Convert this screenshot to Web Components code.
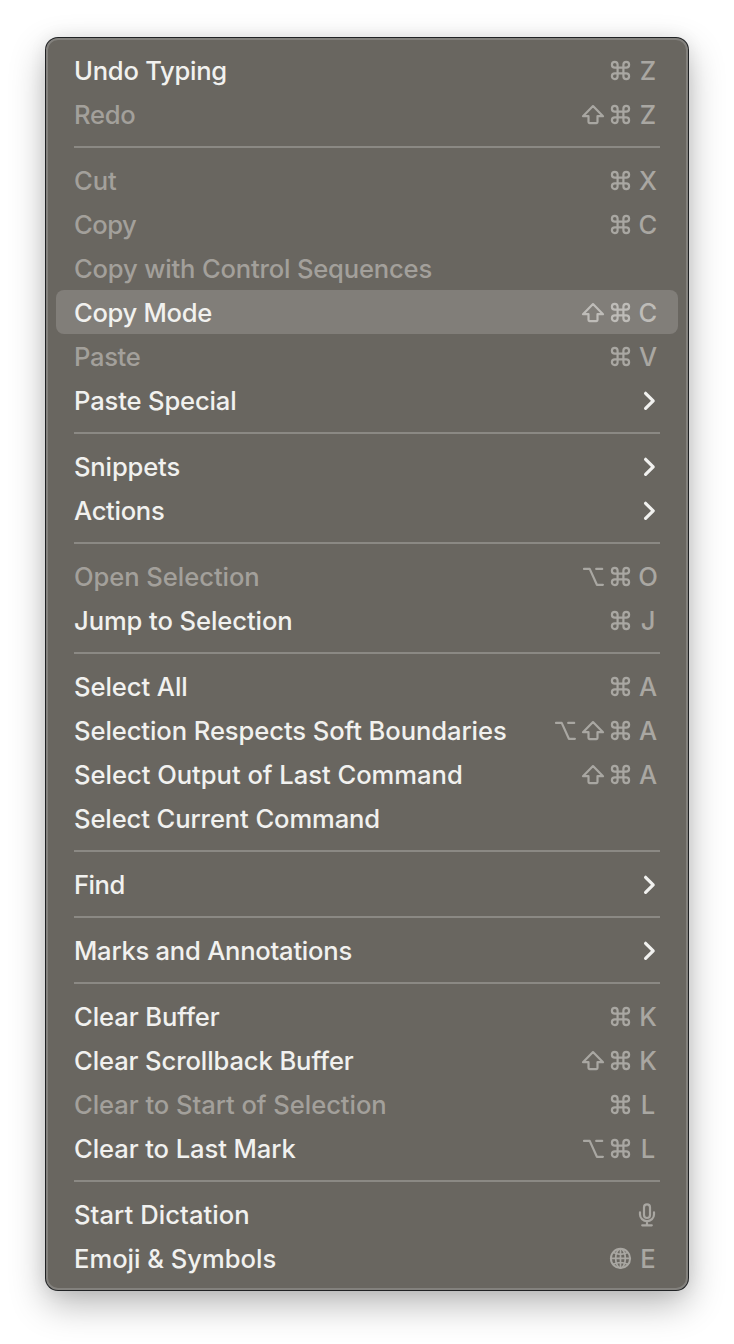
<!DOCTYPE html>
<html lang="en">
<head>
<meta charset="utf-8">
<title>Edit menu</title>
<style>
html,body{margin:0;background:#fff}
body{width:734px;height:1344px;overflow:hidden;font-family:Inter,"Liberation Sans",sans-serif}
</style>
</head>
<body>
<edit-menu></edit-menu>
<script>
const ICONS = {
  cmd: '<path d="M11.6 16.75v11.5a2.85 2.85 0 1 1-2.85-2.85h11.5a2.85 2.85 0 1 1-2.85 2.85v-11.5a2.85 2.85 0 1 1 2.85 2.85h-11.5a2.85 2.85 0 1 1 2.85-2.85z"/>',
  shift: '<path d="M15 14.1 25 24.2h-5.5v5.9a1 1 0 0 1-1 1h-7a1 1 0 0 1-1-1v-5.9H5z"/>',
  opt: '<path d="M6 14.9h5.7l7.2 15.9h6M18.2 14.9h6"/>',
  chevron: '<path stroke-width="3.2" d="m11.6 15.3 7.6 7.5-7.6 7.5"/>',
  mic: '<rect x="10" y="12.4" width="6" height="13.6" rx="3"/><path d="M6 20.3v2.2a7 6.6 0 0 0 14 0v-2.2M13 29.1v4.1M8.2 33.3h9.6"/>',
  globe: '<g stroke-width="1.7"><circle cx="14.5" cy="22.4" r="9.6" stroke-width="2"/><ellipse cx="14.5" cy="22.4" rx="4.8" ry="9.6"/><path d="M14.5 12.8v19.2M4.9 22.4h19.2M7.2 16.6q7.3 3.4 14.6 0M7.2 28.2q7.3-3.4 14.6 0"/></g>'
};

class MenuKey extends HTMLElement {
  connectedCallback() {
    const root = this.attachShadow({mode: 'open'});
    const icon = ICONS[this.getAttribute('icon')];
    root.innerHTML = `<style>
      :host{display:block;width:28px;height:44px;text-align:center;line-height:46px}
      svg{display:block;fill:none;stroke:currentColor;stroke-width:2.2;stroke-linecap:round;stroke-linejoin:round}
    </style>` + (icon ? `<svg width="28" height="44" viewBox="0 0 28 44">${icon}</svg>` : '<slot></slot>');
  }
}
customElements.define('menu-key', MenuKey);

class MenuItem extends HTMLElement {
  connectedCallback() {
    const root = this.attachShadow({mode: 'open'});
    root.innerHTML = `<style>
      :host{display:flex;justify-content:space-between;height:44px;margin:0 8px;padding:0 16px 0 18px;border-radius:8px;
        font-size:25.6px;font-weight:450;line-height:45px;color:#f1f1ef;white-space:nowrap}
      :host([disabled]){color:#a3a09b}
      :host([selected]){background:#817e79}
      .keys{display:flex;color:#a9a7a2}
      :host([selected]) .keys{color:#bebcb8}
      :host([submenu]) .keys{color:#f1f1ef}
    </style><span class="label"><slot></slot></span><span class="keys"><slot name="keys"></slot></span>`;
    const label = root.querySelector('.label');
    const target = Number(this.getAttribute('measure'));
    const count = this.firstChild.textContent.length;
    const natural = label.getBoundingClientRect().width;
    label.style.letterSpacing = ((target - natural) / (count - 1)).toFixed(3) + 'px';
  }
}
customElements.define('menu-item', MenuItem);

class MenuSeparator extends HTMLElement {
  connectedCallback() {
    this.attachShadow({mode: 'open'}).innerHTML = `<style>
      :host{display:block;padding:10px 26px}
      div{height:2px;background:#8b8984}
    </style><div></div>`;
  }
}
customElements.define('menu-separator', MenuSeparator);

// label, right edge of the label, shortcut keys, state; null is a separator
const ITEMS = [
  ['Undo Typing', 226.5, 'cmd Z'],
  ['Redo', 135, 'shift cmd Z', 'disabled'],
  null,
  ['Cut', 116, 'cmd X', 'disabled'],
  ['Copy', 136, 'cmd C', 'disabled'],
  ['Copy with Control Sequences', 431.5, '', 'disabled'],
  ['Copy Mode', 211.5, 'shift cmd C', 'selected'],
  ['Paste', 140, 'cmd V', 'disabled'],
  ['Paste Special', 236, 'chevron', 'submenu'],
  null,
  ['Snippets', 179.5, 'chevron', 'submenu'],
  ['Actions', 164, 'chevron', 'submenu'],
  null,
  ['Open Selection', 259, 'opt cmd O', 'disabled'],
  ['Jump to Selection', 292, 'cmd J'],
  null,
  ['Select All', 187, 'cmd A'],
  ['Selection Respects Soft Boundaries', 506, 'opt shift cmd A'],
  ['Select Output of Last Command', 462, 'shift cmd A'],
  ['Select Current Command', 379.5, ''],
  null,
  ['Find', 124.5, 'chevron', 'submenu'],
  null,
  ['Marks and Annotations', 351.5, 'chevron', 'submenu'],
  null,
  ['Clear Buffer', 219, 'cmd K'],
  ['Clear Scrollback Buffer', 353, 'shift cmd K'],
  ['Clear to Start of Selection', 386, 'cmd L', 'disabled'],
  ['Clear to Last Mark', 295, 'opt cmd L'],
  null,
  ['Start Dictation', 249, 'mic'],
  ['Emoji & Symbols', 275.5, 'globe E']
];

class EditMenu extends HTMLElement {
  connectedCallback() {
    const rows = ITEMS.map(item => {
      if (!item) return '<menu-separator></menu-separator>';
      const [label, right, keys, state = ''] = item;
      const cells = keys.split(' ').filter(Boolean).map(k =>
        ICONS[k] ? `<menu-key slot="keys" icon="${k}"></menu-key>` : `<menu-key slot="keys">${k}</menu-key>`).join('');
      return `<menu-item ${state} measure="${right - 73.3}">${label.replace('&', '&amp;')}${cells}</menu-item>`;
    }).join('');
    this.attachShadow({mode: 'open'}).innerHTML = `<style>
      :host{display:block;box-sizing:border-box;width:642px;height:1252px;margin:38px 0 0 46px;padding:8px 0;
        border:2px solid #83817d;border-radius:12px;background:#696660;
        box-shadow:0 0 0 1px #202224,0 14px 36px rgba(0,0,0,.29),0 0 18px rgba(0,0,0,.08)}
    </style>${rows}`;
  }
}
customElements.define('edit-menu', EditMenu);
</script>
</body>
</html>
